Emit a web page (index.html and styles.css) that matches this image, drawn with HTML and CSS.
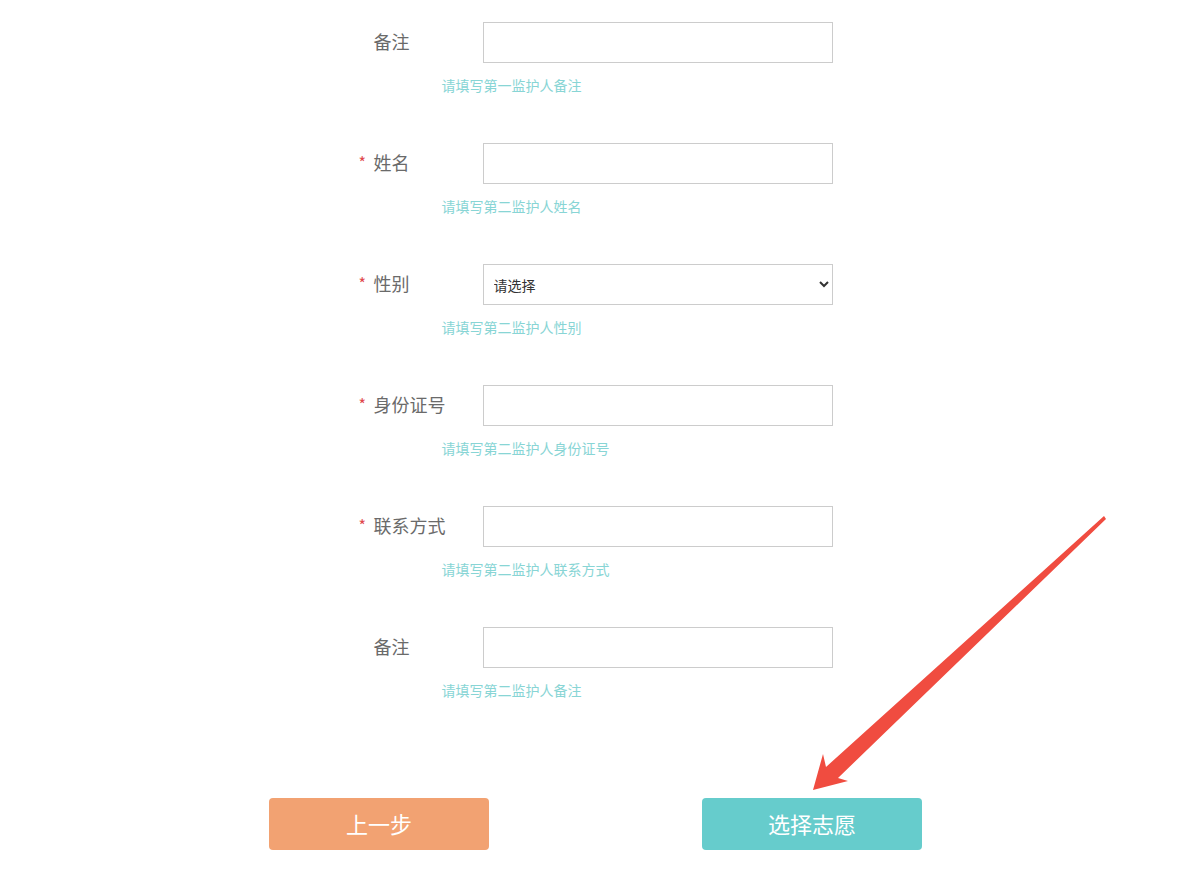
FILE: index.html
```html
<!DOCTYPE html>
<html lang="zh-CN">
<head>
    <meta charset="UTF-8">
    <title>监护人信息</title>
    <link rel="stylesheet" href="styles.css">
</head>
<body>

<div class="form-wrap">
    <div class="form-row">
        <div class="field">
            <span class="star"></span>
            <label class="label">备注</label>
            <input type="text" class="input">
        </div>
        <p class="hint">请填写第一监护人备注</p>
    </div>

    <div class="form-row">
        <div class="field">
            <span class="star">*</span>
            <label class="label">姓名</label>
            <input type="text" class="input">
        </div>
        <p class="hint">请填写第二监护人姓名</p>
    </div>

    <div class="form-row">
        <div class="field">
            <span class="star">*</span>
            <label class="label">性别</label>
            <select class="input select">
                <option value="">请选择</option>
                <option value="m">男</option>
                <option value="f">女</option>
            </select>
        </div>
        <p class="hint">请填写第二监护人性别</p>
    </div>

    <div class="form-row">
        <div class="field">
            <span class="star">*</span>
            <label class="label">身份证号</label>
            <input type="text" class="input">
        </div>
        <p class="hint">请填写第二监护人身份证号</p>
    </div>

    <div class="form-row">
        <div class="field">
            <span class="star">*</span>
            <label class="label">联系方式</label>
            <input type="text" class="input">
        </div>
        <p class="hint">请填写第二监护人联系方式</p>
    </div>

    <div class="form-row">
        <div class="field">
            <span class="star"></span>
            <label class="label">备注</label>
            <input type="text" class="input">
        </div>
        <p class="hint">请填写第二监护人备注</p>
    </div>
</div>

<div class="btn-bar">
    <button class="btn btn-prev">上一步</button>
    <button class="btn btn-next">选择志愿</button>
</div>

<svg class="arrow" width="1185" height="895" viewBox="0 0 1185 895">
    <polygon fill="#f04c40" points="1104,516 1106,519 838,778 848,781 813,790 823,754 826,767"/>
</svg>

</body>
</html>
```

FILE: styles.css
```css
body {
    margin: 0;
    font-family: "Noto Sans CJK SC", "Noto Sans", sans-serif;
    background-color: white;
}
.form-wrap {
    width: 474px;
    margin-left: calc(50% - 234px);
    padding-top: 22px;
}
.form-row {
    height: 121px;
}
.field {
    display: flex;
    align-items: center;
    height: 41px;
}
.star {
    width: 15px;
    color: #e0474b;
    font-size: 16px;
    line-height: 1;
    padding-bottom: 4px;
}
.label {
    width: 109px;
    font-size: 18px;
    color: #6a6a6a;
    padding-bottom: 4px;
}
.input {
    box-sizing: border-box;
    width: 350px;
    height: 41px;
    border: 1px solid #ccc;
    padding: 0 10px;
    font-family: inherit;
    font-size: 14px;
    color: #333;
    background: white;
    outline: none;
}
.select {
    padding-left: 6px;
}
.hint {
    margin: 13px 0 0 83px;
    font-size: 14px;
    line-height: 18px;
    color: #88d5d5;
}
.btn-bar {
    display: flex;
    justify-content: center;
    gap: 213px;
    margin-top: 50px;
    padding-left: 6px;
}
.btn {
    width: 220px;
    height: 52px;
    border: none;
    border-radius: 4px;
    color: white;
    font-family: inherit;
    font-size: 22px;
    padding-bottom: 4px;
    cursor: pointer;
}
.btn-prev {
    background-color: #f2a272;
}
.btn-next {
    background-color: #66cccc;
}
.arrow {
    position: absolute;
    left: 0;
    top: 0;
    pointer-events: none;
}
```
